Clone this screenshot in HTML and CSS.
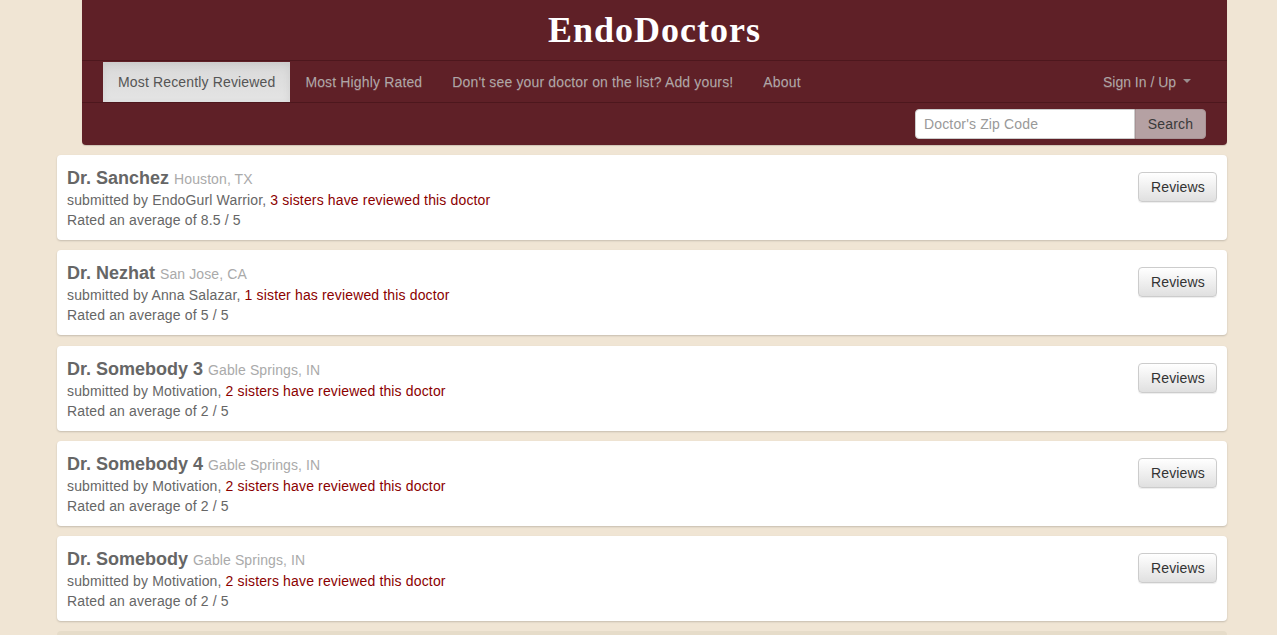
FILE: index.html
```html
<!DOCTYPE html>
<html>
<head>
<meta charset="utf-8">
<title>EndoDoctors</title>
<link rel="stylesheet" href="styles.css">
</head>
<body>
<div class="page">
  <header class="header">
    <h1 class="brand">EndoDoctors</h1>
    <nav class="nav">
      <ul class="nav-list">
        <li class="nav-item active">Most Recently Reviewed</li>
        <li class="nav-item">Most Highly Rated</li>
        <li class="nav-item">Don't see your doctor on the list? Add yours!</li>
        <li class="nav-item">About</li>
      </ul>
      <div class="nav-item signin">Sign In / Up <span class="caret"></span></div>
    </nav>
    <form class="search">
      <input class="search-input" type="text" placeholder="Doctor's Zip Code">
      <button class="search-btn" type="button">Search</button>
    </form>
  </header>

  <main class="list">
    <div class="card">
      <div class="info">
        <div class="name">Dr. Sanchez <span class="loc">Houston, TX</span></div>
        <div class="line">submitted by EndoGurl Warrior, <span class="link">3 sisters have reviewed this doctor</span></div>
        <div class="line">Rated an average of 8.5 / 5</div>
      </div>
      <button class="btn" type="button">Reviews</button>
    </div>
    <div class="card">
      <div class="info">
        <div class="name">Dr. Nezhat <span class="loc">San Jose, CA</span></div>
        <div class="line">submitted by Anna Salazar, <span class="link">1 sister has reviewed this doctor</span></div>
        <div class="line">Rated an average of 5 / 5</div>
      </div>
      <button class="btn" type="button">Reviews</button>
    </div>
    <div class="card">
      <div class="info">
        <div class="name">Dr. Somebody 3 <span class="loc">Gable Springs, IN</span></div>
        <div class="line">submitted by Motivation, <span class="link">2 sisters have reviewed this doctor</span></div>
        <div class="line">Rated an average of 2 / 5</div>
      </div>
      <button class="btn" type="button">Reviews</button>
    </div>
    <div class="card">
      <div class="info">
        <div class="name">Dr. Somebody 4 <span class="loc">Gable Springs, IN</span></div>
        <div class="line">submitted by Motivation, <span class="link">2 sisters have reviewed this doctor</span></div>
        <div class="line">Rated an average of 2 / 5</div>
      </div>
      <button class="btn" type="button">Reviews</button>
    </div>
    <div class="card">
      <div class="info">
        <div class="name">Dr. Somebody <span class="loc">Gable Springs, IN</span></div>
        <div class="line">submitted by Motivation, <span class="link">2 sisters have reviewed this doctor</span></div>
        <div class="line">Rated an average of 2 / 5</div>
      </div>
      <button class="btn" type="button">Reviews</button>
    </div>
    <div class="card card-muted"></div>
  </main>
</div>
</body>
</html>
```

FILE: styles.css
```css
html, body {
  margin: 0;
  padding: 0;
}
body {
  background: #f0e5d4;
  font-family: "Liberation Sans", Arial, sans-serif;
  font-size: 14px;
  letter-spacing: 0.15px;
  color: #666;
  overflow: hidden;
}
.page {
  width: 1170px;
  margin-left: 57px;
}
.header {
  margin-left: 25px;
  background: #5f2027;
  border-radius: 0 0 4px 4px;
  box-shadow: 0 1px 1px rgba(0,0,0,0.15);
}
.brand {
  margin: 0;
  height: 60px;
  line-height: 61px;
  text-align: center;
  color: #fff;
  font-family: "Liberation Serif", "Times New Roman", serif;
  font-weight: bold;
  font-size: 36px;
  letter-spacing: 1px;
}
.nav {
  display: flex;
  justify-content: space-between;
  align-items: stretch;
  padding: 1px 21px 0;
  height: 40px;
  border-top: 1px solid #4d171d;
  border-bottom: 1px solid #4d171d;
}
.nav-list {
  display: flex;
  margin: 0;
  padding: 0;
  list-style: none;
}
.nav-item {
  padding: 0 15px;
  line-height: 40px;
  color: #aea6a6;
  text-shadow: 0 1px 0 rgba(255,255,255,0.15);
  white-space: nowrap;
}
.nav-item.active {
  background: linear-gradient(#d9d9d9, #e4e4e4);
  box-shadow: inset 0 3px 8px rgba(0,0,0,0.08);
  color: #555;
  text-shadow: none;
}
.signin {
  letter-spacing: 0;
}
.caret {
  display: inline-block;
  width: 0;
  height: 0;
  margin-left: 3px;
  vertical-align: middle;
  border-top: 4px solid #9a8f8f;
  border-left: 4px solid transparent;
  border-right: 4px solid transparent;
  position: relative;
  top: -2px;
}
.search {
  display: flex;
  justify-content: flex-end;
  margin: 0;
  padding: 6px 21px 6px;
}
.search-input {
  box-sizing: border-box;
  width: 220px;
  height: 30px;
  margin: 0;
  padding: 4px 8px;
  border: 1px solid #ccc;
  border-radius: 4px 0 0 4px;
  background: #fff;
  font-family: "Liberation Sans", Arial, sans-serif;
  font-size: 14px;
  letter-spacing: 0.15px;
  color: #555;
  outline: none;
}
.search-input::placeholder {
  color: #999;
}
.search-btn {
  box-sizing: border-box;
  width: 71px;
  height: 30px;
  margin: 0;
  border: 1px solid #a89395;
  border-radius: 0 4px 4px 0;
  background: #b5a1a3;
  font-family: "Liberation Sans", Arial, sans-serif;
  font-size: 14px;
  letter-spacing: 0.15px;
  color: #3a3a3a;
}
.list {
  padding-top: 10px;
}
.card {
  box-sizing: border-box;
  display: flex;
  justify-content: space-between;
  align-items: flex-start;
  height: 85px;
  margin-bottom: 10.3px;
  padding: 10px;
  background: #fff;
  border-radius: 4px;
  box-shadow: 0 1px 2px rgba(0,0,0,0.18);
}
.card-muted {
  background: #e6dcc9;
  box-shadow: none;
}
.name {
  height: 25px;
  line-height: 27px;
  font-size: 18px;
  font-weight: bold;
  letter-spacing: 0;
  color: #666;
}
.loc {
  font-size: 14px;
  font-weight: normal;
  letter-spacing: 0.1px;
  color: #aaa;
}
.line {
  line-height: 20px;
  color: #666;
}
.link {
  color: #8b0000;
}
.btn {
  margin-top: 7px;
  box-sizing: border-box;
  width: 79px;
  height: 30px;
  padding: 0 12px;
  border: 1px solid #ccc;
  border-radius: 4px;
  background: linear-gradient(#ffffff, #e0e0e0);
  box-shadow: inset 0 1px 0 rgba(255,255,255,0.15), 0 1px 1px rgba(0,0,0,0.075);
  font-family: "Liberation Sans", Arial, sans-serif;
  font-size: 14px;
  letter-spacing: 0.15px;
  color: #333;
}
```
